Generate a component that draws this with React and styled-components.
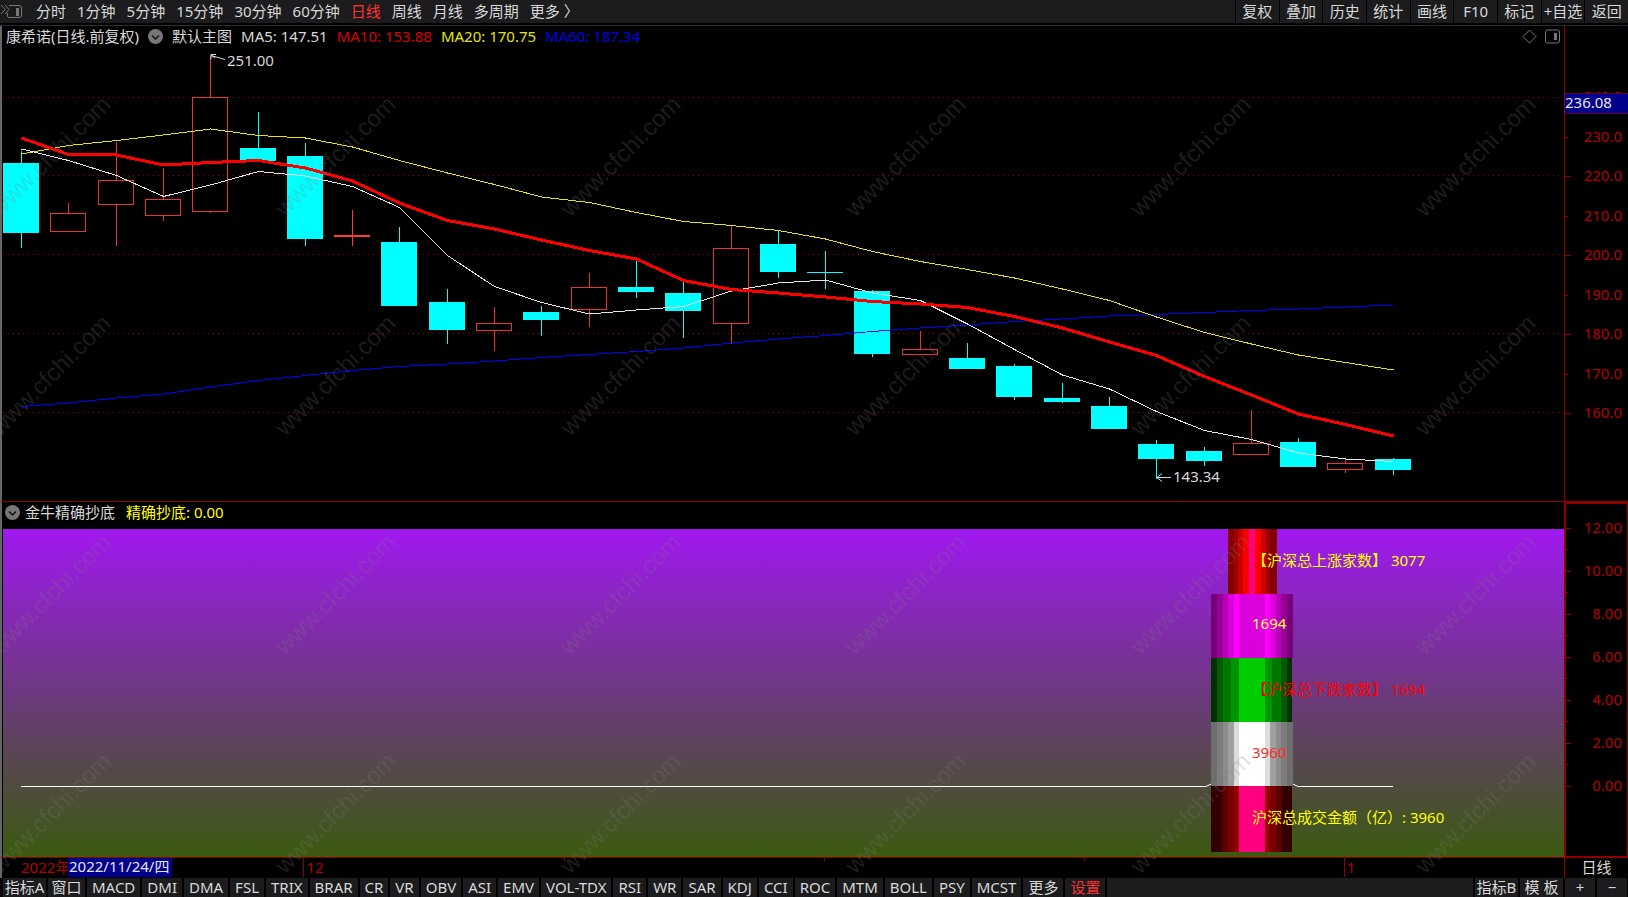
import React from "react"
import styled, { createGlobalStyle } from "styled-components"

const GlobalStyle = createGlobalStyle`
  * {
    box-sizing: border-box;
  }
  body {
    margin: 0;
    background: #000;
    color: #d8d8d8;
    font-family: "Noto Sans", "Noto Sans CJK SC", sans-serif;
    font-size: 15px;
    line-height: 20px;
  }
  button {
    border: 0;
    padding: 0;
    background: none;
    color: inherit;
    font: inherit;
    cursor: pointer;
  }
`

const PERIODS = ["分时", "1分钟", "5分钟", "15分钟", "30分钟", "60分钟", "日线", "周线", "月线", "多周期", "更多 〉"]
const TOOLS = ["复权", "叠加", "历史", "统计", "画线", "F10", "标记", "+自选", "返回"]
const INDICATORS = [
  "MACD", "DMI", "DMA", "FSL", "TRIX", "BRAR", "CR", "VR", "OBV", "ASI", "EMV", "VOL-TDX",
  "RSI", "WR", "SAR", "KDJ", "CCI", "ROC", "MTM", "BOLL", "PSY", "MCST", "更多", "设置",
]

// up, high, top, bottom, low
const CANDLES = [
  [0, 151, 163, 233, 248],
  [1, 203, 214, 231, 231],
  [1, 142, 181, 204, 246],
  [1, 168, 200, 215, 221],
  [1, 56, 98, 211, 213],
  [0, 112, 148, 161, 161],
  [0, 143, 156, 239, 246],
  [1, 210, 236, 236, 246],
  [0, 227, 242, 306, 306],
  [0, 289, 302, 330, 344],
  [1, 307, 324, 330, 351],
  [0, 306, 312, 320, 336],
  [1, 273, 288, 309, 327],
  [0, 261, 287, 292, 298],
  [0, 282, 293, 311, 338],
  [1, 225, 249, 323, 344],
  [0, 231, 244, 272, 278],
  [0, 251, 272, 273, 289],
  [0, 290, 291, 354, 357],
  [1, 331, 350, 354, 354],
  [0, 343, 358, 369, 369],
  [0, 364, 366, 397, 400],
  [0, 383, 398, 402, 403],
  [0, 397, 406, 429, 429],
  [0, 440, 444, 459, 479],
  [0, 447, 451, 461, 466],
  [1, 410, 444, 454, 454],
  [0, 438, 442, 467, 467],
  [1, 459, 464, 469, 473],
  [0, 458, 459, 470, 475],
]

const MA5 = [149, 160.5, 175.5, 196.5, 185, 171.5, 176, 186.5, 207.5, 255.5, 286.5, 302.5, 314, 310, 306.5, 291, 283, 280, 293, 300.5, 324, 349.5, 375, 389, 411.5, 430.5, 439.5, 453, 459, 461.5]
const MA10 = [138, 154.5, 155, 165, 162.5, 160.5, 168, 181, 203, 220.5, 229, 240, 250.5, 259, 280.5, 289.5, 293, 297, 301.5, 304, 307.5, 316.5, 328, 342, 355.5, 376.5, 395, 414, 424.5, 436]
const MA20 = [154, 145.5, 140.5, 135, 129, 135.5, 138, 147, 160.5, 173, 184.5, 197, 202.5, 212.5, 221.5, 225.5, 230.5, 239, 251.5, 261.5, 269.5, 278, 289, 300.5, 317, 332.5, 344, 355, 362.5, 370]
const MA60 = [406.5, 403, 398, 394, 387, 380.5, 375.5, 370.5, 366.5, 364, 361, 357.5, 354.5, 351.5, 348, 343, 339, 335.5, 331.5, 328, 325, 321.5, 319, 316, 314.5, 312.5, 310.5, 309, 307, 305]

const GRID = [98, 176, 255, 334, 413]
const PRICES = [
  ["240.0", 97], ["230.0", 137], ["220.0", 176], ["210.0", 216], ["200.0", 255],
  ["190.0", 295], ["180.0", 334], ["170.0", 374], ["160.0", 413],
]
const LEVELS = ["12.00", "10.00", "8.00", "6.00", "4.00", "2.00", "0.00"]

// width of each stripe and its colour, from the left edge
const BLOCKS = [
  { x: 1228, y: 529, h: 65, stripes: [[6, "#820000"], [4, "#a00000"], [5, "#c80000"], [6, "#fa0000"], [6, "#ff0080"], [6, "#fa0000"], [5, "#c80000"], [4, "#a00000"], [7, "#820000"]] },
  { x: 1211, y: 594, h: 64, stripes: [[6, "#780078"], [6, "#960096"], [5, "#b900b9"], [6, "#dc00dc"], [5, "#ff00ff"], [26, "#dc00dc"], [5, "#ff00ff"], [6, "#dc00dc"], [5, "#b900b9"], [6, "#960096"], [6, "#780078"]] },
  { x: 1211, y: 658, h: 64, stripes: [[6, "#003200"], [6, "#005a00"], [8, "#007800"], [8, "#009600"], [26, "#00cd00"], [7, "#009600"], [9, "#007800"], [6, "#005a00"], [5, "#003200"]] },
  { x: 1211, y: 722, h: 64, stripes: [[6, "#6e6e6e"], [6, "#7d7d7d"], [5, "#8c8c8c"], [6, "#a0a0a0"], [5, "#dcdcdc"], [26, "#ffffff"], [5, "#dcdcdc"], [6, "#a0a0a0"], [5, "#8c8c8c"], [6, "#7d7d7d"], [6, "#6e6e6e"]] },
  { x: 1211, y: 786, h: 66, stripes: [[11, "#320000"], [6, "#5a0000"], [6, "#780000"], [5, "#960000"], [26, "#ff0080"], [5, "#960000"], [6, "#780000"], [6, "#5a0000"], [10, "#320000"]] },
]

const Page = styled.main`
  position: relative;
  display: flex;
  flex-direction: column;
  min-height: 100vh;
  overflow: hidden;
`

const TopBar = styled.nav`
  display: flex;
  align-items: flex-start;
  height: 26px;
  background: #1c1c1e;
  border-bottom: 1px solid #2c2c2e;
  box-shadow: inset 0 -2px #000;
  white-space: nowrap;
`

const SideToggle = styled.button`
  width: 36px;
  height: 23px;
`

const Periods = styled.div`
  display: flex;
  flex: 1;
  gap: 11px;
`

const Period = styled.button`
  height: 22px;
  color: ${(props) => (props.$active ? "#ff3232" : "inherit")};
`

const Tools = styled.div`
  display: grid;
  grid-template-columns: repeat(9, 1fr);
  width: 393px;
`

const Tool = styled.button`
  height: 23px;
  padding-bottom: 1px;
  border-left: 1px solid #000;
  text-align: center;
`

const Panel = styled.section`
  display: grid;
  grid-template-columns: minmax(0, 1fr) 64px;
  flex: ${(props) => props.$size} 1 ${(props) => props.$size}px;
  border-left: 2px solid #666;
  border-bottom: 1px solid #8c0000;
`

const Column = styled.div`
  display: flex;
  flex-direction: column;
`

const Legend = styled.header`
  display: flex;
  align-items: center;
  gap: 9px;
  height: 20px;
  padding: 0 4px;
  white-space: nowrap;
`

const SubLegend = styled(Legend)`
  gap: 5px;
  margin-bottom: 6px;
  padding: 0 3px;
`

const Series = styled.span`
  color: ${(props) => props.$color};
`

const SubSeries = styled(Series)`
  margin-left: 6px;
`

const RoundButton = styled.button`
  display: flex;
  width: 15px;
  height: 15px;
  border-radius: 50%;
  background: #77777a;
`

const PanelTools = styled.div`
  display: flex;
  gap: 8px;
  margin-left: auto;
`

const IconButton = styled.button`
  display: flex;
`

const Plot = styled.svg`
  display: block;
  flex: 1 1 0;
  width: 100%;
  min-height: 0;
`

const PricePlot = styled(Plot)`
  margin-top: 2px;
`

const Axis = styled.svg`
  display: block;
  width: 100%;
  height: 100%;
`

const Scale = styled.div`
  position: relative;
  border-left: ${(props) => (props.$framed ? 2 : 1)}px solid #8c0000;
  border-top: ${(props) => (props.$framed ? "2px solid #8c0000" : "0")};
  border-right: ${(props) => (props.$framed ? "1px solid #8c0000" : "0")};
  border-bottom: ${(props) => (props.$framed ? "1px solid #8c0000" : "0")};
`

const CursorPrice = styled.div`
  position: absolute;
  top: 14%;
  left: 0;
  right: 0;
  height: 21px;
  line-height: 16px;
  border: solid #64002d;
  border-width: 1px 0;
  background: #00008c;
  color: #e6e6e6;
`

const DateRow = styled.div`
  display: grid;
  grid-template-columns: minmax(0, 1fr) 64px;
  height: 20px;
  border-left: 2px solid #666;
`

const Dates = styled.div`
  position: relative;
  display: flex;
  padding-left: 19px;
  color: #b40000;
  line-height: 18px;
  white-space: nowrap;
`

const Year = styled.span`
  width: 47px;
`

const CursorDate = styled.span`
  height: 19px;
  padding: 0 3px 0 1px;
  line-height: 17px;
  background: #00008c;
  color: #e6e6e6;
`

const Mark = styled.span`
  position: absolute;
  top: 0;
  left: ${(props) => props.$left}%;
  height: ${(props) => (props.$long ? 19 : 3)}px;
  padding-left: 2px;
  border-left: 1px solid #8c0000;
`

const DateUnit = styled.div`
  border-left: 1px solid #8c0000;
  line-height: 18px;
  text-align: center;
`

const BottomBar = styled.nav`
  display: flex;
  height: 19px;
  padding-left: 2px;
  background: #000;
  white-space: nowrap;
`

const Tab = styled.button`
  flex: none;
  height: 19px;
  padding: 0 ${(props) => (props.$width ? 0 : 5)}px;
  margin: 0 1px;
  line-height: 19px;
  background: #1c1c1e;
  color: ${(props) => (props.$hot ? "#ff3232" : "inherit")};
  width: ${(props) => (props.$width ? props.$width + "px" : "auto")};
`

const Filler = styled.div`
  flex: 1;
  margin: 0 1px;
  background: #1c1c1e;
`

const Watermarks = styled.svg`
  position: absolute;
  inset: 0;
  width: 100%;
  height: 100%;
  pointer-events: none;
  font-family: "Liberation Sans", sans-serif;
  font-size: 24px;
  fill: rgba(128, 128, 128, 0.22);
`

const candleX = (i) => Math.round(21 + 47.3 * i)
const toPoints = (values) => values.map((y, i) => `${candleX(i) + 0.5},${y}`).join(" ")
const percent = (value, start, size) => `${((value - start) / size) * 100}%`

const Candle = ({ index, data }) => {
  const [up, high, top, bottom, low] = data
  const x = candleX(index)
  const color = up ? "#ff3a3a" : "#00ffff"
  if (!up || top === bottom) {
    return (
      <g fill={color}>
        <rect x={x} y={high} width="1" height={low - high} />
        <rect x={x - 18} y={up ? top - 1 : top} width="36" height={up ? 2 : bottom - top} />
      </g>
    )
  }
  return (
    <g stroke={color} fill="none" strokeOpacity="0.9">
      <path d={`M${x + 0.5} ${high}V${top}M${x + 0.5} ${bottom}V${low}`} />
      <rect x={x - 17.5} y={top - 0.5} width="35" height={bottom - top + 1} />
    </g>
  )
}

const PriceChart = () => (
  <PricePlot role="img" aria-label="日线">
    <svg viewBox="2 48 1562 453" width="100%" height="100%" preserveAspectRatio="none">
      {GRID.map((y) => (
        <line key={y} x1="3" x2="1562" y1={y - 0.5} y2={y - 0.5} stroke="#8c0000" strokeDasharray="1 4" />
      ))}
      {CANDLES.map((data, i) => (
        <Candle key={i} index={i} data={data} />
      ))}
      <g fill="none" shapeRendering="crispEdges">
        <polyline points={toPoints(MA60)} stroke="#0000ff" />
        <polyline points={toPoints(MA20)} stroke="#e6e600" />
        <polyline points={toPoints(MA5)} stroke="#e6e6e6" />
        <polyline points={toPoints(MA10)} stroke="#ff0000" strokeWidth="3" />
      </g>
      <g fill="none" stroke="#d8d8d8">
        <path d="M211 55.500L225 59.500M211 59.500V54.500H216M211 55L215 58" />
        <path d="M1157 477.500H1171M1162 473.500L1157 477.500L1162 481.500" />
      </g>
    </svg>
    <text x={percent(227, 2, 1562)} y={percent(66, 48, 453)} fill="#d8d8d8">251.00</text>
    <text x={percent(1173, 2, 1562)} y={percent(482, 48, 453)} fill="#d8d8d8">143.34</text>
  </PricePlot>
)

const Block = ({ block }) => {
  let x = block.x
  return block.stripes.map(([width, color], i) => {
    const left = x
    x += width
    return <rect key={i} x={left} y={block.y} width={width} height={block.h} fill={color} />
  })
}

const BLOCK_LABELS = [
  ["【沪深总上涨家数】 3077", 1252, 566, "#ffff00"],
  ["1694", 1252, 629, "#ffff3c"],
  ["【沪深总下跌家数】 1694", 1252, 695, "#ff0000"],
  ["3960", 1252, 758, "#ff2828"],
  ["沪深总成交金额（亿）: 3960", 1252, 823, "#ffff00"],
]

const MarketChart = () => (
  <Plot role="img" aria-label="金牛精确抄底">
    <svg viewBox="2 528 1562 329" width="100%" height="100%" preserveAspectRatio="none">
      <defs>
        <linearGradient id="sky" x1="0" x2="0" y1="0" y2="1">
          <stop offset="0" stopColor="#a018f0" />
          <stop offset="1" stopColor="#3a5a0e" />
        </linearGradient>
      </defs>
      <rect x="3" y="529" width="1561" height="328" fill="url(#sky)" />
      <polyline points="21,786.5 1206,786.5 1211,784 1293,784 1298,786.5 1393,786.5" fill="none" stroke="#fff" />
      {BLOCKS.map((block) => (
        <Block key={block.y} block={block} />
      ))}
    </svg>
    {BLOCK_LABELS.map(([text, x, y, color]) => (
      <text key={y} x={percent(x, 2, 1562)} y={percent(y, 528, 329)} fill={color}>{text}</text>
    ))}
  </Plot>
)

const PriceAxis = () => (
  <Scale>
    <Axis>
      {PRICES.map(([label, y], i) => (
        <svg key={label} y={percent(y, 26, 475)} overflow="visible">
          <path d={`M0 .5H${i % 2 ? 3 : 6}`} stroke="#8c0000" />
          <text x="57" y="5" textAnchor="end" fill="#b40000">{label}</text>
        </svg>
      ))}
    </Axis>
    <CursorPrice>236.08</CursorPrice>
  </Scale>
)

const LevelAxis = () => (
  <Scale $framed>
    <Axis>
      {LEVELS.map((label, i) => (
        <svg key={label} y={percent(528 + i * 43, 504, 352)} overflow="visible">
          <path d={i < 6 ? "M0 .5H5M0 21.500H2" : "M0 .5H5"} stroke="#8c0000" />
          <text x="56" y="5" textAnchor="end" fill="#b40000">{label}</text>
        </svg>
      ))}
    </Axis>
  </Scale>
)

const ChevronDown = () => (
  <svg width="15" height="15" viewBox="0 0 15 15" fill="none" stroke="#111" strokeWidth="1.500">
    <path d="M4 6.500L7.500 10L11 6.500" />
  </svg>
)

const Watermark = () => (
  <Watermarks aria-hidden="true">
    {[218, 437, 656, 875].map((y) =>
      [0, 285, 570, 855, 1140, 1425].map((x) => (
        <text key={`${x}-${y}`} transform={`translate(${x} ${y}) rotate(-45)`}>www.cfchi.com</text>
      ))
    )}
  </Watermarks>
)

const App = () => (
  <Page>
    <GlobalStyle />
    <TopBar>
      <SideToggle aria-label="侧栏">
        <svg width="36" height="23" fill="none" stroke="#77777a">
          <path d="M1 5L5 9.500L1 14M5 5L9 9.500L5 14" />
          <path d="M9 5.500H19Q21.500 5.500 21.500 8V15Q21.500 17.500 19 17.500H9Q7.500 17.500 7.500 16V13" />
          <rect x="16" y="8" width="3" height="8" fill="#77777a" stroke="none" />
        </svg>
      </SideToggle>
      <Periods>
        {PERIODS.map((period) => (
          <Period key={period} $active={period === "日线"}>{period}</Period>
        ))}
      </Periods>
      <Tools>
        {TOOLS.map((tool) => (
          <Tool key={tool}>{tool}</Tool>
        ))}
      </Tools>
    </TopBar>

    <Panel $size={476}>
      <Column>
        <Legend>
          <span>康希诺(日线.前复权)</span>
          <RoundButton aria-label="主图菜单"><ChevronDown /></RoundButton>
          <span>默认主图</span>
          <Series $color="#d8d8d8">MA5: 147.51</Series>
          <Series $color="#dc0000">MA10: 153.88</Series>
          <Series $color="#e6e600">MA20: 170.75</Series>
          <Series $color="#0000e6">MA60: 187.34</Series>
          <PanelTools>
            <IconButton aria-label="标注">
              <svg width="15" height="15" fill="none" stroke="#77777a">
                <path d="M7.500 1L14 7.500L7.500 14L1 7.500Z" />
              </svg>
            </IconButton>
            <IconButton aria-label="右侧栏">
              <svg width="15" height="15" fill="none" stroke="#77777a">
                <rect x="0.500" y="1" width="14" height="13" rx="2" />
                <rect x="9" y="4" width="3" height="7" fill="#77777a" stroke="none" />
              </svg>
            </IconButton>
          </PanelTools>
        </Legend>
        <PriceChart />
      </Column>
      <PriceAxis />
    </Panel>

    <Panel $size={356}>
      <Column>
        <SubLegend>
          <RoundButton aria-label="副图菜单"><ChevronDown /></RoundButton>
          <span>金牛精确抄底</span>
          <SubSeries $color="#ffff00">精确抄底: 0.00</SubSeries>
        </SubLegend>
        <MarketChart />
      </Column>
      <LevelAxis />
    </Panel>

    <DateRow>
      <Dates>
        <Year>2022年</Year>
        <CursorDate>2022/11/24/四</CursorDate>
        <Mark $left={19.3} $long>12</Mark>
        <Mark $left={36} />
        <Mark $left={52.6} />
        <Mark $left={69.3} />
        <Mark $left={85.9} $long>1</Mark>
      </Dates>
      <DateUnit>日线</DateUnit>
    </DateRow>

    <BottomBar>
      <Tab $width={43}>指标A</Tab>
      <Tab $width={37}>窗口</Tab>
      {INDICATORS.map((name) => (
        <Tab key={name} $hot={name === "设置"}>{name}</Tab>
      ))}
      <Filler />
      <Tab $width={43}>指标B</Tab>
      <Tab $width={43}>模 板</Tab>
      <Tab $width={30}>+</Tab>
      <Tab $width={30}>−</Tab>
    </BottomBar>
    <Watermark />
  </Page>
)

export default App
